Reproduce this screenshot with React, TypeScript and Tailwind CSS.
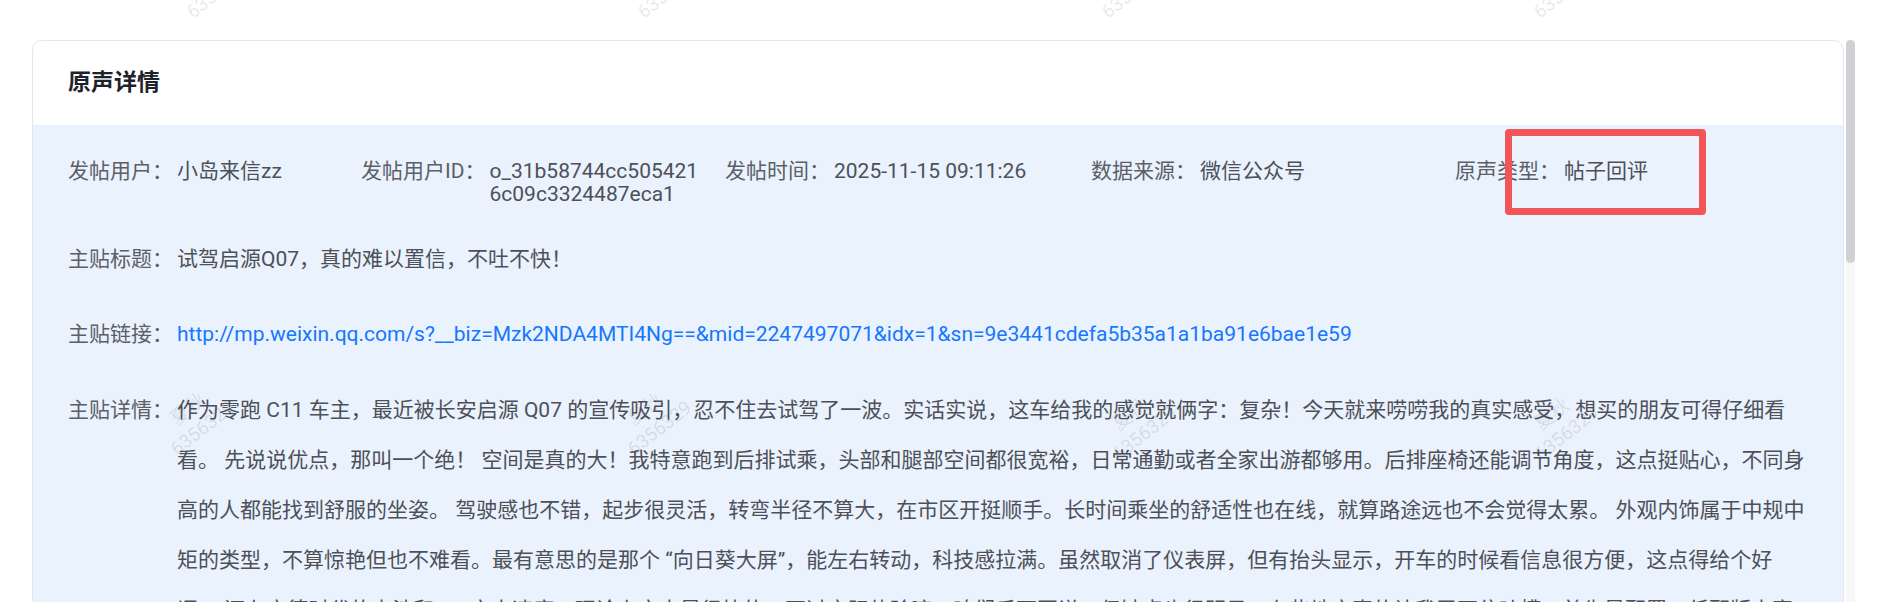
import React from 'react';

const FONT = 'font-["Roboto","Noto_Sans_CJK_SC",sans-serif]';

const detailText =
  '作为零跑 C11 车主，最近被长安启源 Q07 的宣传吸引，忍不住去试驾了一波。实话实说，这车给我的感觉就俩字：复杂！今天就来唠唠我的真实感受，想买的朋友可得仔细看看。 先说说优点，那叫一个绝！ 空间是真的大！我特意跑到后排试乘，头部和腿部空间都很宽裕，日常通勤或者全家出游都够用。后排座椅还能调节角度，这点挺贴心，不同身高的人都能找到舒服的坐姿。 驾驶感也不错，起步很灵活，转弯半径不算大，在市区开挺顺手。长时间乘坐的舒适性也在线，就算路途远也不会觉得太累。 外观内饰属于中规中矩的类型，不算惊艳但也不难看。最有意思的是那个 “向日葵大屏”，能左右转动，科技感拉满。虽然取消了仪表屏，但有抬头显示，开车的时候看信息很方便，这点得给个好评。 还有宁德时代的电池和 3C 充电速度，理论上充电是很快的，不过实际体验嘛，咱们后面再说。但缺点也很明显，有些地方真的让我忍不住吐槽：首先是配置，低配版太寒酸了，连个全景天窗都没有，座椅加热也得加钱选装。';

const watermarks = [
  { left: 174, top: -42 },
  { left: 625, top: -42 },
  { left: 1089, top: -42 },
  { left: 1521, top: -42 },
  { left: 158, top: 395 },
  { left: 615, top: 395 },
  { left: 1100, top: 400 },
  { left: 1522, top: 400 },
];

function InfoItem({ label, value, valueClass = '' }: { label: string; value: string; valueClass?: string }) {
  return (
    <div className="flex items-start">
      <span className="shrink-0 text-[#5b5f67]">{label}</span>
      <span className={`ml-[4px] text-[#4d5058] ${valueClass}`}>{value}</span>
    </div>
  );
}

export default function App() {
  return (
    <div className={`relative h-[602px] w-full overflow-hidden bg-white ${FONT}`}>
      <div className="flex pt-[40px] pl-[32px] pr-[31px]">
        {/* Card */}
        <div className="h-[620px] flex-1 overflow-hidden rounded-[10px] border border-[#e2e7f0]">
          <div className="flex h-[84px] items-center px-[35px] text-[23px] font-bold text-[#1f2329]">
            原声详情
          </div>
          <div className="h-full bg-[#eaf2fd] pl-[35px] pr-[36px] pt-[35px] text-[21px]">
            {/* Meta row */}
            <div className="grid grid-cols-[293px_364px_366px_364px_1fr] leading-[23px]">
              <InfoItem label="发帖用户：" value="小岛来信zz" />
              <InfoItem
                label="发帖用户ID："
                value="o_31b58744cc5054216c09c3324487eca1"
                valueClass="w-[215px] break-all"
              />
              <InfoItem label="发帖时间：" value="2025-11-15 09:11:26" />
              <InfoItem label="数据来源：" value="微信公众号" />
              <InfoItem label="原声类型：" value="帖子回评" />
            </div>

            <div className="mt-[28px] flex leading-[50px]">
              <span className="shrink-0 text-[#5b5f67]">主贴标题：</span>
              <span className="ml-[4px] text-[#4d5058]">试驾启源Q07，真的难以置信，不吐不快！</span>
            </div>

            <div className="mt-[25px] flex leading-[50px]">
              <span className="shrink-0 text-[#5b5f67]">主贴链接：</span>
              <a className="ml-[4px] text-[#1677ff]" href="#">
                http://mp.weixin.qq.com/s?__biz=Mzk2NDA4MTI4Ng==&amp;mid=2247497071&amp;idx=1&amp;sn=9e3441cdefa5b35a1a1ba91e6bae1e59
              </a>
            </div>

            <div className="mt-[26px] flex leading-[50px]">
              <span className="shrink-0 text-[#5b5f67]">主贴详情：</span>
              <p className="ml-[4px] flex-1 text-[#4d5058]">{detailText}</p>
            </div>
          </div>
        </div>

        {/* Scrollbar */}
        <div className="ml-[2px] flex h-[600px] w-[9px] flex-col bg-[#f8f8f9]">
          <div className="h-[223px] rounded-full bg-[#cfd1d6]" />
        </div>
      </div>

      {/* Watermarks */}
      {watermarks.map((w, i) => (
        <div
          key={i}
          className="pointer-events-none absolute -rotate-[38deg] text-center text-[19px] leading-[24px] text-black/[0.1]"
          style={{ left: w.left, top: w.top }}
        >
          <div>夏秋</div>
          <div>6356329</div>
        </div>
      ))}

      {/* Annotation box */}
      <div className="pointer-events-none absolute left-[1505px] top-[129px] h-[86px] w-[201px] rounded-[4px] border-[7px] border-[#f25557]" />
    </div>
  );
}
